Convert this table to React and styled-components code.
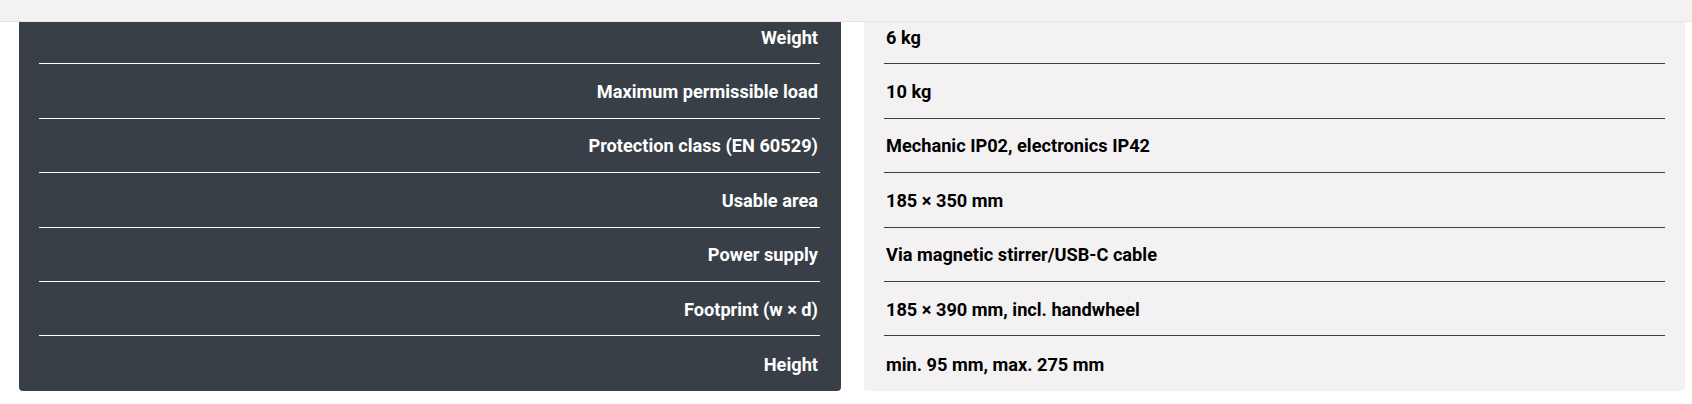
import React from "react";
import styled, { createGlobalStyle } from "styled-components";

const GlobalStyle = createGlobalStyle`
  html, body {
    margin: 0;
    padding: 0;
    background: #ffffff;
    font-family: Roboto, "Liberation Sans", sans-serif;
  }
`;

const TopBar = styled.header`
  position: fixed;
  top: 0;
  left: 0;
  right: 0;
  height: 21px;
  background: #f3f1f2;
  border-bottom: 1px solid #e6e4e5;
  z-index: 2;
`;

const Specs = styled.section`
  display: grid;
  grid-template-columns: 822px 821px;
  column-gap: 23px;
  padding: 10px 7px 0 19px;
`;

const Panel = styled.div`
  background: ${(p) => (p.$dark ? "#393f46" : "#f3f1f2")};
  color: ${(p) => (p.$dark ? "#ffffff" : "#000000")};
  border-radius: 0 0 4px 4px;
  padding: 0 ${(p) => (p.$dark ? "21px" : "20px")} 0 20px;
`;

const Row = styled.div`
  box-sizing: border-box;
  height: 54.4px;
  display: flex;
  align-items: center;
  justify-content: ${(p) => (p.$right ? "flex-end" : "flex-start")};
  padding: ${(p) => (p.$right ? "2px 2px 0 0" : "2px 0 0 2px")};
  border-bottom: 1px solid ${(p) => (p.$right ? "#ffffff" : "#393f46")};
  font-size: 18.2px;
  font-weight: 700;
  line-height: 1;

  &:last-child {
    border-bottom: none;
    height: 55px;
  }
`;

const specs = [
  ["Weight", "6 kg"],
  ["Maximum permissible load", "10 kg"],
  ["Protection class (EN 60529)", "Mechanic IP02, electronics IP42"],
  ["Usable area", "185 × 350 mm"],
  ["Power supply", "Via magnetic stirrer/USB-C cable"],
  ["Footprint (w × d)", "185 × 390 mm, incl. handwheel"],
  ["Height", "min. 95 mm, max. 275 mm"],
];

export default function App() {
  return (
    <>
      <GlobalStyle />
      <TopBar />
      <Specs>
        <Panel $dark>
          {specs.map(([label]) => (
            <Row $right key={label}>
              {label}
            </Row>
          ))}
        </Panel>
        <Panel>
          {specs.map(([label, value]) => (
            <Row key={label}>{value}</Row>
          ))}
        </Panel>
      </Specs>
    </>
  );
}
